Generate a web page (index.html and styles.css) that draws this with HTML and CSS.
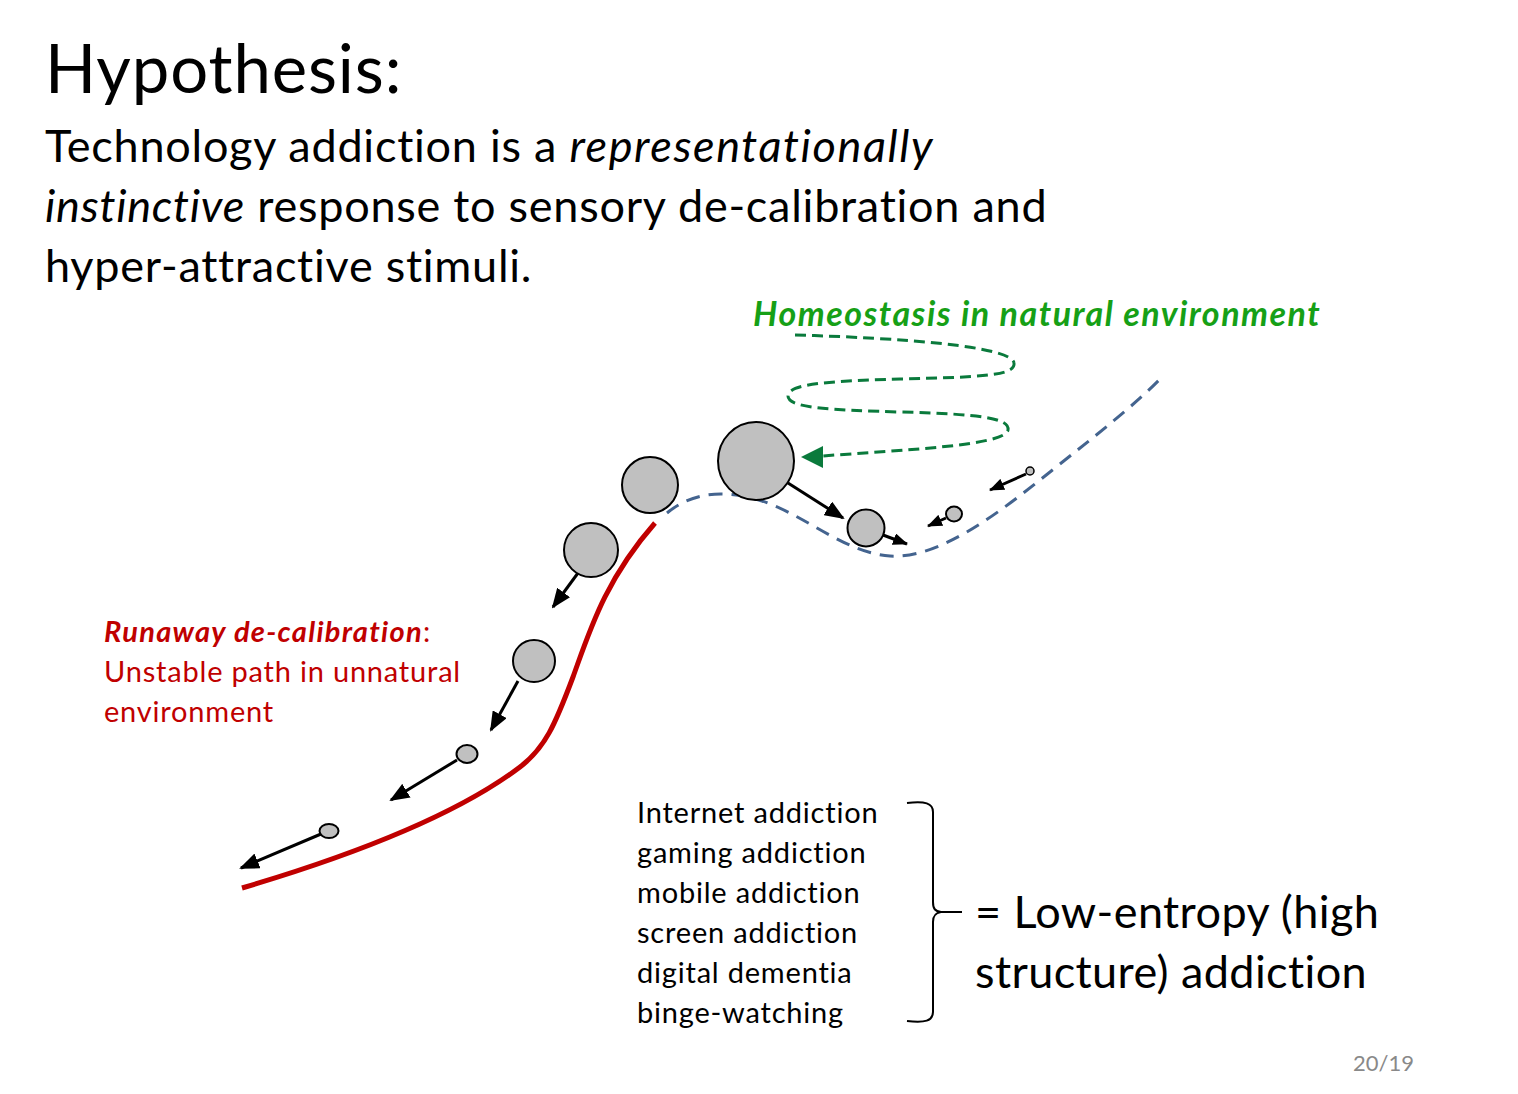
FILE: index.html
```html
<!DOCTYPE html>
<html lang="en">
<head>
<meta charset="utf-8">
<title>Hypothesis</title>
<link rel="stylesheet" href="styles.css">
</head>
<body>
<div class="slide">
  <h1 class="title">Hypothesis:</h1>
  <p class="lead">Technology addiction is a <em class="wide">representationally</em><br><em>instinctive</em> response to sensory de-calibration and<br>hyper-attractive stimuli.</p>

  <svg class="diagram" viewBox="0 0 1518 1094" width="1518" height="1094" aria-hidden="true">
    <defs>
      <marker id="ah" viewBox="0 0 20 16" refX="18" refY="8" markerWidth="20" markerHeight="16" markerUnits="userSpaceOnUse" orient="auto">
        <path d="M0,0 L20,8 L0,16 Z" fill="#000"/>
      </marker>
      <marker id="ahs" viewBox="0 0 15 12" refX="14" refY="6" markerWidth="15" markerHeight="12" markerUnits="userSpaceOnUse" orient="auto">
        <path d="M0,0 L15,6 L0,12 Z" fill="#000"/>
      </marker>
    </defs>

    <!-- red runaway path -->
    <path class="red" d="M242,888 C330,862 450,820 520,767 C545,748 555,725 573,677 C590,630 605,580 655,523"/>

    <!-- blue homeostasis path -->
    <path class="blue" d="M667,513 C690,494 720,488 762,501 C805,515 845,553 890,556 C940,559 1000,512 1050,472 C1095,436 1135,405 1161,378"/>

    <!-- green oscillation -->
    <path class="green" d="M795,335 C900,338 1012,346 1014,363 C1016,376 980,377 900,379 C820,381 788,385 788,396 C788,408 830,410 900,412 C980,414 1010,418 1008,430 C1005,446 900,450 822,456"/>
    <path d="M801,457 L823,446 L823,468 Z" fill="#0a7a3c"/>

    <!-- arrows -->
    <line class="arr" x1="578" y1="573" x2="553" y2="607" marker-end="url(#ah)"/>
    <line class="arr" x1="518" y1="681" x2="491" y2="730" marker-end="url(#ah)"/>
    <line class="arr" x1="457" y1="760" x2="391" y2="800" marker-end="url(#ah)"/>
    <line class="arr" x1="321" y1="834" x2="241" y2="868" marker-end="url(#ah)"/>
    <line class="arr" x1="788" y1="483" x2="843" y2="518" marker-end="url(#ah)"/>
    <line class="arr" x1="883" y1="535" x2="907" y2="544" marker-end="url(#ahs)"/>
    <line class="arr" x1="946" y1="518" x2="928" y2="526" marker-end="url(#ahs)"/>
    <line class="arr" x1="1026" y1="474" x2="990" y2="490" marker-end="url(#ahs)"/>

    <!-- balls -->
    <ellipse class="ball" cx="756" cy="461" rx="38" ry="39"/>
    <circle class="ball" cx="650" cy="485" r="28"/>
    <circle class="ball" cx="591" cy="550" r="27"/>
    <circle class="ball" cx="534" cy="661" r="21"/>
    <ellipse class="ball" cx="467" cy="754" rx="10.5" ry="9"/>
    <ellipse class="ball" cx="329" cy="831" rx="9.5" ry="7"/>
    <circle class="ball" cx="866" cy="528" r="18.5"/>
    <ellipse class="ball" cx="954" cy="514" rx="8" ry="7.5"/>
    <circle class="ball thin" cx="1030" cy="471" r="4"/>

    <!-- brace -->
    <path class="brace" d="M907,803 C925,801 933,803 933,812 L933,902 C933,909 935,911 941,912 C935,913 933,916 933,922 L933,1012 C933,1021 925,1023 907,1021"/>
    <line class="brace" x1="940" y1="912" x2="962" y2="912"/>
  </svg>

  <p class="label green-label"><b><i>Homeostasis in natural environment</i></b></p>
  <p class="label red-label"><b><i>Runaway de-calibration</i></b>:<br>Unstable path in unnatural<br>environment</p>

  <ul class="list">
    <li>Internet addiction</li>
    <li>gaming addiction</li>
    <li>mobile addiction</li>
    <li>screen addiction</li>
    <li>digital dementia</li>
    <li>binge-watching</li>
  </ul>
  <p class="label conclusion">= Low-entropy (high<br>structure) addiction</p>

  <div class="pagenum">20/19</div>
</div>
</body>
</html>
```

FILE: styles.css
```css
* { box-sizing: border-box; }
html, body {
  margin: 0;
  padding: 0;
  background: #ffffff;
}
body {
  font-family: Lato, "Open Sans", "Liberation Sans", sans-serif;
  font-variant-ligatures: none;
  font-feature-settings: "liga" 0;
  color: #000;
}
.slide {
  position: relative;
  width: 1518px;
  height: 1094px;
  overflow: hidden;
  padding: 27px 0 0 45px;
  background: #fff;
}
.title {
  margin: 0;
  font-weight: 400;
  font-size: 67px;
  line-height: 80px;
  letter-spacing: 0.9px;
}
.lead {
  margin: 8px 0 0 0;
  font-size: 45px;
  line-height: 60px;
  font-weight: 400;
  letter-spacing: 0.75px;
}
.lead em { font-style: italic; }
.lead em.wide { letter-spacing: 1.6px; }
.diagram {
  position: absolute;
  left: 0;
  top: 0;
}
.red { fill: none; stroke: #c00000; stroke-width: 5; }
.blue { fill: none; stroke: #44648f; stroke-width: 3; stroke-dasharray: 14 9; }
.green { fill: none; stroke: #0a7a3c; stroke-width: 3; stroke-dasharray: 11 6; }
.arr { stroke: #000; stroke-width: 3; }
.ball { fill: #c0c0c0; stroke: #000; stroke-width: 2; }
.ball.thin { stroke-width: 1.5; }
.brace { fill: none; stroke: #000; stroke-width: 2; }

.label {
  position: absolute;
  margin: 0;
  white-space: nowrap;
}
.green-label {
  left: 753px;
  top: 293px;
  font-size: 34px;
  line-height: 40px;
  letter-spacing: 1.5px;
  color: #16a016;
}
.red-label {
  left: 104px;
  top: 611px;
  font-size: 29px;
  line-height: 40px;
  letter-spacing: 0.8px;
  color: #c00000;
}
.red-label b { letter-spacing: 1.3px; }
.list {
  position: absolute;
  left: 637px;
  top: 792px;
  margin: 0;
  padding: 0;
  list-style: none;
  font-size: 29px;
  line-height: 40px;
  letter-spacing: 0.8px;
}
.conclusion {
  left: 975px;
  top: 881px;
  font-size: 45px;
  line-height: 60px;
  letter-spacing: 0.4px;
}
.pagenum {
  position: absolute;
  left: 1353px;
  top: 1051px;
  font-size: 22px;
  line-height: 24px;
  color: #898989;
}
```
